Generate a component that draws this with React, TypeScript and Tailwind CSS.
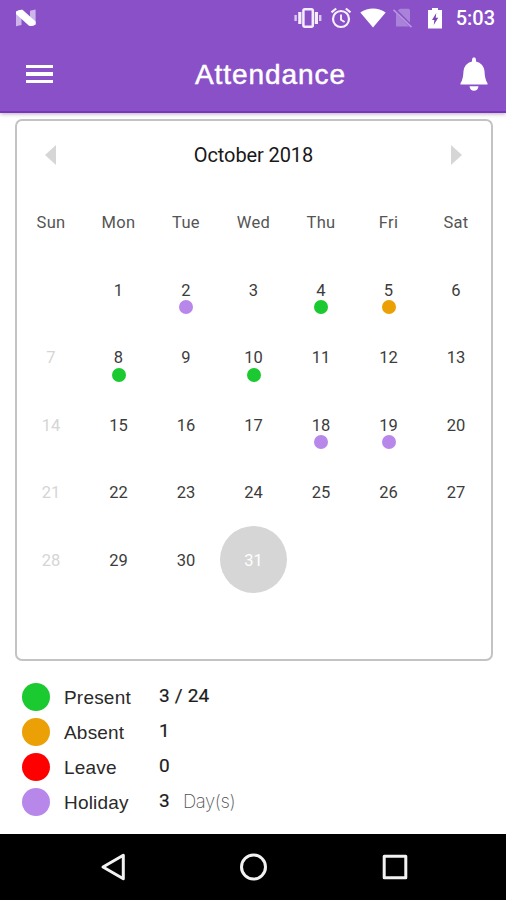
import React from 'react';

type Status = 'present' | 'absent' | 'leave' | 'holiday';

const COLORS: Record<Status, string> = {
  present: 'bg-[#1bc931]',
  absent: 'bg-[#eba006]',
  leave: 'bg-[#fe0000]',
  holiday: 'bg-[#b887ea]',
};

const WEEKDAYS = ['Sun', 'Mon', 'Tue', 'Wed', 'Thu', 'Fri', 'Sat'];
const FIRST_WEEKDAY = 1;
const DAYS_IN_MONTH = 31;
const SELECTED = 31;

const MARKS: Record<number, Status> = {
  2: 'holiday',
  4: 'present',
  5: 'absent',
  8: 'present',
  10: 'present',
  18: 'holiday',
  19: 'holiday',
};

const LEGEND: { status: Status; label: string; value: string; unit?: string }[] = [
  { status: 'present', label: 'Present', value: '3 / 24' },
  { status: 'absent', label: 'Absent', value: '1' },
  { status: 'leave', label: 'Leave', value: '0' },
  { status: 'holiday', label: 'Holiday', value: '3', unit: 'Day(s)' },
];

function StatusBar() {
  return (
    <div className="flex h-9 items-center pl-[15px] pr-[11px] text-white">
      <svg width="22" height="18" viewBox="0 0 22 18">
        <path d="M1 2.5L6.5 4V16L1 17.2ZM15 1.8L20.6 0.6V15.5L15 12Z" fill="#cdb5eb" />
        <path d="M1 2.5Q4 .3 7.5 .8L20.6 12.5V15.5Q17.5 17.8 14 16.8L1 5Z" fill="#fff" />
      </svg>
      <div className="ml-auto flex items-center">
        <svg width="28" height="20" viewBox="0 0 28 20">
          <rect x="9.4" y="1.3" width="9.4" height="17.4" rx="1.4" fill="none" stroke="#f4edfc" strokeWidth="2.5" />
          <path d="M5.8 4V16M22.4 4V16" stroke="#f4edfc" strokeWidth="3.2" />
          <path d="M1.6 7V13M26.2 7V13" stroke="#dac8f0" strokeWidth="2.4" />
        </svg>
        <svg className="ml-2" width="22" height="22" viewBox="0 0 22 22" fill="none" stroke="#f6effd">
          <circle cx="11" cy="12" r="8" strokeWidth="2.2" />
          <path d="M11 7.5V12.7L14.6 15" strokeWidth="1.9" />
          <path d="M1.5 5.4L6.2 1.5M15.8 1.5L20.5 5.4" strokeWidth="2.2" />
        </svg>
        <svg className="ml-2" width="26" height="20" viewBox="0 0 26 20">
          <path d="M.3 4.5C8-.9 18-.9 25.7 4.5L13 19.5Z" fill="#fff" />
        </svg>
        <svg className="ml-[7px]" width="20" height="20" viewBox="0 0 20 20">
          <path d="M3 4L7 .8H15.5Q17 .8 17 2.3V18.5H3Z" fill="#a982d9" />
          <path d="M1.2 1.2L19 19" stroke="#8950c7" strokeWidth="3.2" />
          <path d="M.5 1.8L18.5 19.2" stroke="#b896e0" strokeWidth="1.6" />
        </svg>
        <svg className="ml-[15px]" width="14" height="21" viewBox="0 0 14 21">
          <path d="M4 0H10V2H14V20.5H0V2H4Z" fill="#fff" />
          <path d="M8.3 5L4 12H6.4L5.7 17L10.2 9.8H7.7Z" fill="#7b43b5" />
        </svg>
        <span className="ml-[14px] font-['Roboto',sans-serif] text-[20px] font-medium leading-none">5:03</span>
      </div>
    </div>
  );
}

function Header() {
  return (
    <header className="relative z-10 h-[113px] shrink-0 border-b-2 border-[#7a35bd] bg-[#8950c7] shadow-[0_1px_4px_rgba(60,20,60,0.35)]">
      <StatusBar />
      <div className="flex h-[76px] items-center justify-between pl-[26px] pr-[18px] text-white">
        <button aria-label="Menu" className="flex w-[27px] flex-col gap-[4px]">
          <span className="h-[3.5px] w-full bg-white" />
          <span className="h-[3.5px] w-full bg-white" />
          <span className="h-[3.5px] w-full bg-white" />
        </button>
        <h1 className="ml-[30px] pt-[2px] font-['Liberation_Sans',sans-serif] text-[28px] font-normal leading-none tracking-[0.95px] [-webkit-text-stroke:0.5px_white]">
          Attendance
        </h1>
        <button aria-label="Notifications" className="ml-[2px]">
          <svg width="28" height="35" viewBox="0 0 28 35" fill="#fff">
            <path d="M12 3Q12 .3 14 .3Q16 .3 16 3V4.4Q23.5 6.3 24.5 14Q24.8 22.5 27.5 26.2V27.5H.5V26.2Q3.2 22.5 3.5 14Q4.5 6.3 12 4.4Z" />
            <path d="M9.5 29.3H18.5Q17.8 33.8 14 33.8Q10.2 33.8 9.5 29.3Z" />
          </svg>
        </button>
      </div>
    </header>
  );
}

function DayCell({ index }: { index: number }) {
  const day = index - FIRST_WEEKDAY + 1;
  if (day < 1 || day > DAYS_IN_MONTH) return <div />;
  const mark = MARKS[day];
  const selected = day === SELECTED;
  const tone = selected
    ? 'rounded-full bg-[#d6d6d6] text-white'
    : index % 7 === 0
      ? 'text-[#d5d5d5]'
      : 'text-[#3c3c3c]';
  return (
    <div className={`relative flex items-center justify-center pt-[4px] ${tone}`}>
      <span>{day}</span>
      {mark && <i className={`absolute left-1/2 top-[44.5px] size-[14px] -translate-x-1/2 rounded-full ${COLORS[mark]}`} />}
    </div>
  );
}

function Calendar() {
  return (
    <section className="ml-[14.5px] mt-[6px] h-[542px] w-[478px] shrink-0 rounded-[7px] border-2 border-[#c3c3c3] bg-white pl-[0.75px] font-['Roboto',sans-serif] text-[16.5px]">
      <div className="flex h-[67px] w-[472.5px] items-center justify-between px-[28px]">
        <svg width="11" height="20" viewBox="0 0 11 20">
          <path d="M11 0V20L0 10Z" fill="#d6d6d6" />
        </svg>
        <h2 className="pt-[1px] text-[20px] font-normal tracking-[-0.1px] text-[#181818]">October 2018</h2>
        <svg width="11" height="20" viewBox="0 0 11 20">
          <path d="M0 0V20L11 10Z" fill="#d6d6d6" />
        </svg>
      </div>
      <div className="grid h-[67.5px] w-[472.5px] grid-cols-7 items-center pt-[4px] text-center tracking-[0.3px] text-[#555]">
        {WEEKDAYS.map((d) => (
          <span key={d}>{d}</span>
        ))}
      </div>
      <div className="grid w-[472.5px] auto-rows-[67.5px] grid-cols-7">
        {Array.from({ length: 35 }, (_, i) => (
          <DayCell key={i} index={i} />
        ))}
      </div>
    </section>
  );
}

function Legend() {
  return (
    <section className="mt-[18px] pl-[21.5px]">
      {LEGEND.map((item) => (
        <div key={item.status} className="flex h-[35.2px] items-center">
          <span className={`size-[28px] rounded-full ${COLORS[item.status]}`} />
          <span className="ml-[14.5px] w-[95px] pt-[1px] font-['Liberation_Sans',sans-serif] text-[19px] leading-none tracking-[0.2px] text-[#2a2a2a]">
            {item.label}
          </span>
          <span className="pb-[2.5px] font-['Roboto',sans-serif] text-[19px] font-normal leading-none tracking-[0.2px] text-[#1c1c1c] [-webkit-text-stroke:0.2px_#1c1c1c]">
            {item.value}
          </span>
          {item.unit && (
            <span className="ml-[13px] pb-[2px] font-['Inter',sans-serif] text-[18.5px] font-extralight leading-none tracking-[-0.4px] text-[#555]">
              {item.unit}
            </span>
          )}
        </div>
      ))}
    </section>
  );
}

function NavigationBar() {
  return (
    <nav className="mt-auto flex h-[66.5px] shrink-0 items-center justify-between bg-black pl-[98.5px] pr-[98.5px]">
      <svg width="27" height="28" viewBox="0 0 27 28" fill="none" stroke="#f2f2f2" strokeWidth="3" strokeLinejoin="round">
        <path d="M24.3 2.2V25.8L4 14Z" />
      </svg>
      <svg width="28" height="28" viewBox="0 0 28 28" fill="none" stroke="#f2f2f2" strokeWidth="3">
        <circle cx="13.5" cy="14" r="12" />
      </svg>
      <svg width="26" height="26" viewBox="0 0 26 26" fill="none" stroke="#f2f2f2" strokeWidth="3" strokeLinejoin="round">
        <rect x="2.2" y="2.2" width="21.6" height="21.6" />
      </svg>
    </nav>
  );
}

export default function App() {
  return (
    <main className="flex h-[900px] w-[506px] flex-col overflow-hidden bg-white">
      <Header />
      <Calendar />
      <Legend />
      <NavigationBar />
    </main>
  );
}
